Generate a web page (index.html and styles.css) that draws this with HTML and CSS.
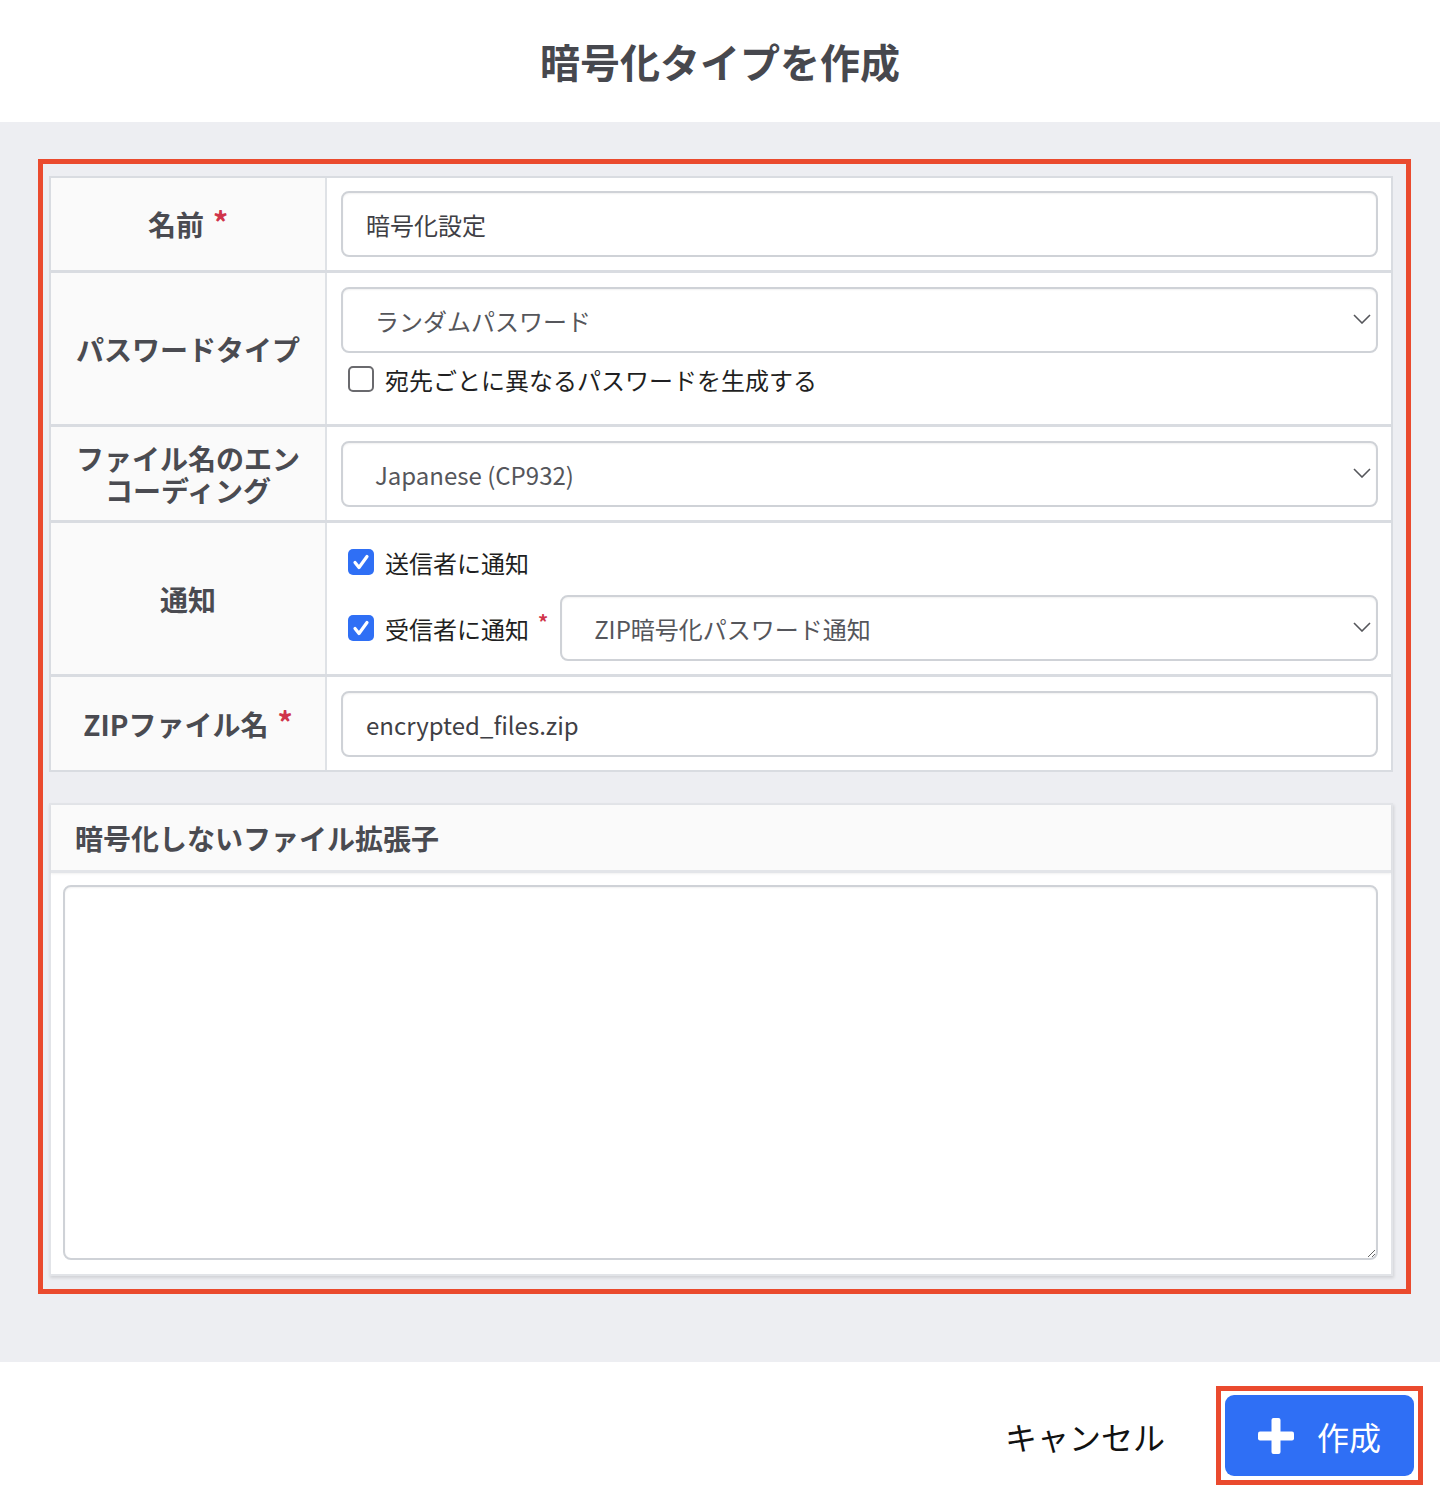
FILE: index.html
```html
<!DOCTYPE html>
<html lang="ja">
  <head>
    <meta charset="UTF-8" />
    <meta name="viewport" content="width=device-width, initial-scale=1" />
    <title>暗号化タイプを作成</title>
    <link rel="stylesheet" href="styles.css">
  </head>

  <body>
    <header class="modal-head">
      <h1>暗号化タイプを作成</h1>
    </header>

    <main class="modal-body">
      <div class="highlight">
        <div class="form-table">
          <div class="row">
            <div class="label">名前<span class="req">*</span></div>
            <div class="field">
              <input type="text" class="text-input" value="暗号化設定" />
            </div>
          </div>

          <div class="row">
            <div class="label">パスワードタイプ</div>
            <div class="field">
              <div class="select-wrap">
                <select class="select-input">
                  <option>ランダムパスワード</option>
                </select>
                <svg class="chevron" viewBox="0 0 18 10"><path d="M1 1 L9 9 L17 1" /></svg>
              </div>
              <label class="check check-gap">
                <span class="box"></span>
                宛先ごとに異なるパスワードを生成する
              </label>
            </div>
          </div>

          <div class="row">
            <div class="label">ファイル名のエンコーディング</div>
            <div class="field">
              <div class="select-wrap">
                <select class="select-input">
                  <option>Japanese (CP932)</option>
                </select>
                <svg class="chevron" viewBox="0 0 18 10"><path d="M1 1 L9 9 L17 1" /></svg>
              </div>
            </div>
          </div>

          <div class="row">
            <div class="label">通知</div>
            <div class="field notify">
              <label class="check first-check">
                <span class="box checked">
                  <svg viewBox="0 0 26 26"><path d="M7 13.5 L11 18.5 L19 7.5" /></svg>
                </span>
                送信者に通知
              </label>
              <div class="notify-line">
                <label class="check">
                  <span class="box checked">
                    <svg viewBox="0 0 26 26"><path d="M7 13.5 L11 18.5 L19 7.5" /></svg>
                  </span>
                  受信者に通知<span class="req small">*</span>
                </label>
                <div class="select-wrap grow">
                  <select class="select-input">
                    <option>ZIP暗号化パスワード通知</option>
                  </select>
                  <svg class="chevron" viewBox="0 0 18 10"><path d="M1 1 L9 9 L17 1" /></svg>
                </div>
              </div>
            </div>
          </div>

          <div class="row">
            <div class="label">ZIPファイル名<span class="req">*</span></div>
            <div class="field">
              <input type="text" class="text-input" value="encrypted_files.zip" />
            </div>
          </div>
        </div>

        <section class="panel">
          <div class="panel-head">暗号化しないファイル拡張子</div>
          <div class="panel-body">
            <textarea class="area"></textarea>
          </div>
        </section>
      </div>
    </main>

    <footer class="modal-foot">
      <button class="cancel">キャンセル</button>
      <div class="btn-wrap">
        <button class="btn-create">
          <svg class="plus" viewBox="0 0 36 36">
            <rect x="13.5" y="0" width="9" height="36" rx="2" />
            <rect x="0" y="13.5" width="36" height="9" rx="2" />
          </svg>
          作成
        </button>
      </div>
    </footer>
  </body>
</html>
```

FILE: styles.css
```css
body {
  margin: 0;
  background-color: #fff;
  color: #4a4b51;
  font-family: "Noto Sans CJK JP", "Noto Sans", sans-serif;
}

.modal-head {
  height: 122px;
  display: flex;
  align-items: center;
  justify-content: center;
}

.modal-head h1 {
  margin: 0;
  font-size: 40px;
  font-weight: 700;
  line-height: 1;
  color: #47484e;
}

.modal-body {
  background-color: #edeef2;
  padding: 37px 29px 68px 38px;
}

.highlight {
  border: 5px solid #ea4a2e;
  padding: 12px 13px 13px 6px;
}

.form-table {
  border: 2px solid #d9dce1;
  background-color: #fff;
}

.row {
  display: flex;
  border-bottom: 3px solid #d9dce1;
}

.row:last-child {
  border-bottom: 0;
}

.label {
  width: 276px;
  flex-shrink: 0;
  box-sizing: border-box;
  padding: 0 20px;
  display: flex;
  align-items: center;
  justify-content: center;
  text-align: center;
  background-color: #fafafa;
  border-right: 2px solid #dfe2e6;
  font-size: 28px;
  font-weight: 700;
  line-height: 32px;
}

.req {
  color: #d0344a;
  font-size: 30px;
  font-weight: 700;
  margin-left: 9px;
  position: relative;
  top: -3px;
}

.req.small {
  font-size: 20px;
  margin-left: 9px;
  top: -7px;
}

.field {
  flex: 1;
  padding: 13px 13px 13px 14px;
}

.row + .row .field {
  padding-top: 14px;
}

.text-input,
.select-input {
  display: block;
  width: 100%;
  height: 66px;
  box-sizing: border-box;
  border: 2px solid #cfd2d7;
  border-radius: 8px;
  box-shadow: inset 0 1px 2px rgba(0, 0, 0, 0.06);
  background-color: #fff;
  font-family: inherit;
  font-size: 24px;
  color: #3f4045;
  padding: 0 23px;
  outline: none;
}

.select-input {
  appearance: none;
  -webkit-appearance: none;
  padding: 0 50px 0 32px;
  color: #55565b;
}

.select-wrap {
  position: relative;
}

.select-wrap.grow {
  flex: 1;
}

.chevron {
  position: absolute;
  right: 7px;
  top: 50%;
  width: 18px;
  height: 10px;
  margin-top: -6px;
  fill: none;
  stroke: #55565b;
  stroke-width: 1.6;
}

.check {
  display: flex;
  align-items: center;
  height: 34px;
  padding-left: 7px;
  font-size: 24px;
  color: #1f1f22;
  white-space: nowrap;
}

.check-gap {
  margin: 9px 0 15px;
}

.box {
  width: 26px;
  height: 26px;
  box-sizing: border-box;
  border: 2px solid #6a6a6e;
  border-radius: 5px;
  margin-right: 11px;
  background-color: #fff;
  display: flex;
}

.box.checked {
  border: 0;
  background-color: #2f6ff5;
}

.box svg {
  width: 26px;
  height: 26px;
  fill: none;
  stroke: #fff;
  stroke-width: 3.2;
  stroke-linecap: round;
  stroke-linejoin: round;
}

.notify {
  display: flex;
  flex-direction: column;
}

.first-check {
  margin: 8px 0 16px;
}

.notify-line {
  display: flex;
  align-items: center;
  gap: 12px;
}

.panel {
  margin-top: 31px;
  border: 2px solid #e2e4e8;
  background-color: #fff;
  box-shadow: 1px 2px 3px rgba(0, 0, 0, 0.12);
}

.panel-head {
  height: 65px;
  padding: 0 24px;
  display: flex;
  align-items: center;
  background-color: #fafafa;
  border-bottom: 3px solid #e3e5e9;
  box-shadow: 0 1px 2px rgba(0, 0, 0, 0.06);
  font-size: 28px;
  font-weight: 700;
}

.panel-body {
  padding: 12px 13px 14px 12px;
}

.area {
  display: block;
  width: 100%;
  height: 375px;
  box-sizing: border-box;
  border: 2px solid #cfd2d7;
  border-radius: 8px;
  box-shadow: inset 0 1px 2px rgba(0, 0, 0, 0.06);
  resize: vertical;
  font-family: inherit;
  font-size: 24px;
  outline: none;
}

.modal-foot {
  display: flex;
  justify-content: flex-end;
  align-items: center;
  gap: 51px;
  padding: 24px 17px 24px 0;
}

.cancel {
  background: none;
  border: 0;
  padding: 0;
  font-family: inherit;
  font-size: 32px;
  color: #111;
  cursor: pointer;
}

.btn-wrap {
  border: 5px solid #ea4a2e;
  padding: 4px;
}

.btn-create {
  width: 189px;
  height: 81px;
  border: 0;
  border-radius: 9px;
  background-color: #2f6ff5;
  color: #fff;
  font-family: inherit;
  font-size: 32px;
  display: flex;
  align-items: center;
  justify-content: center;
  gap: 23px;
  cursor: pointer;
}

.plus {
  width: 36px;
  height: 36px;
  fill: #fff;
}
```
